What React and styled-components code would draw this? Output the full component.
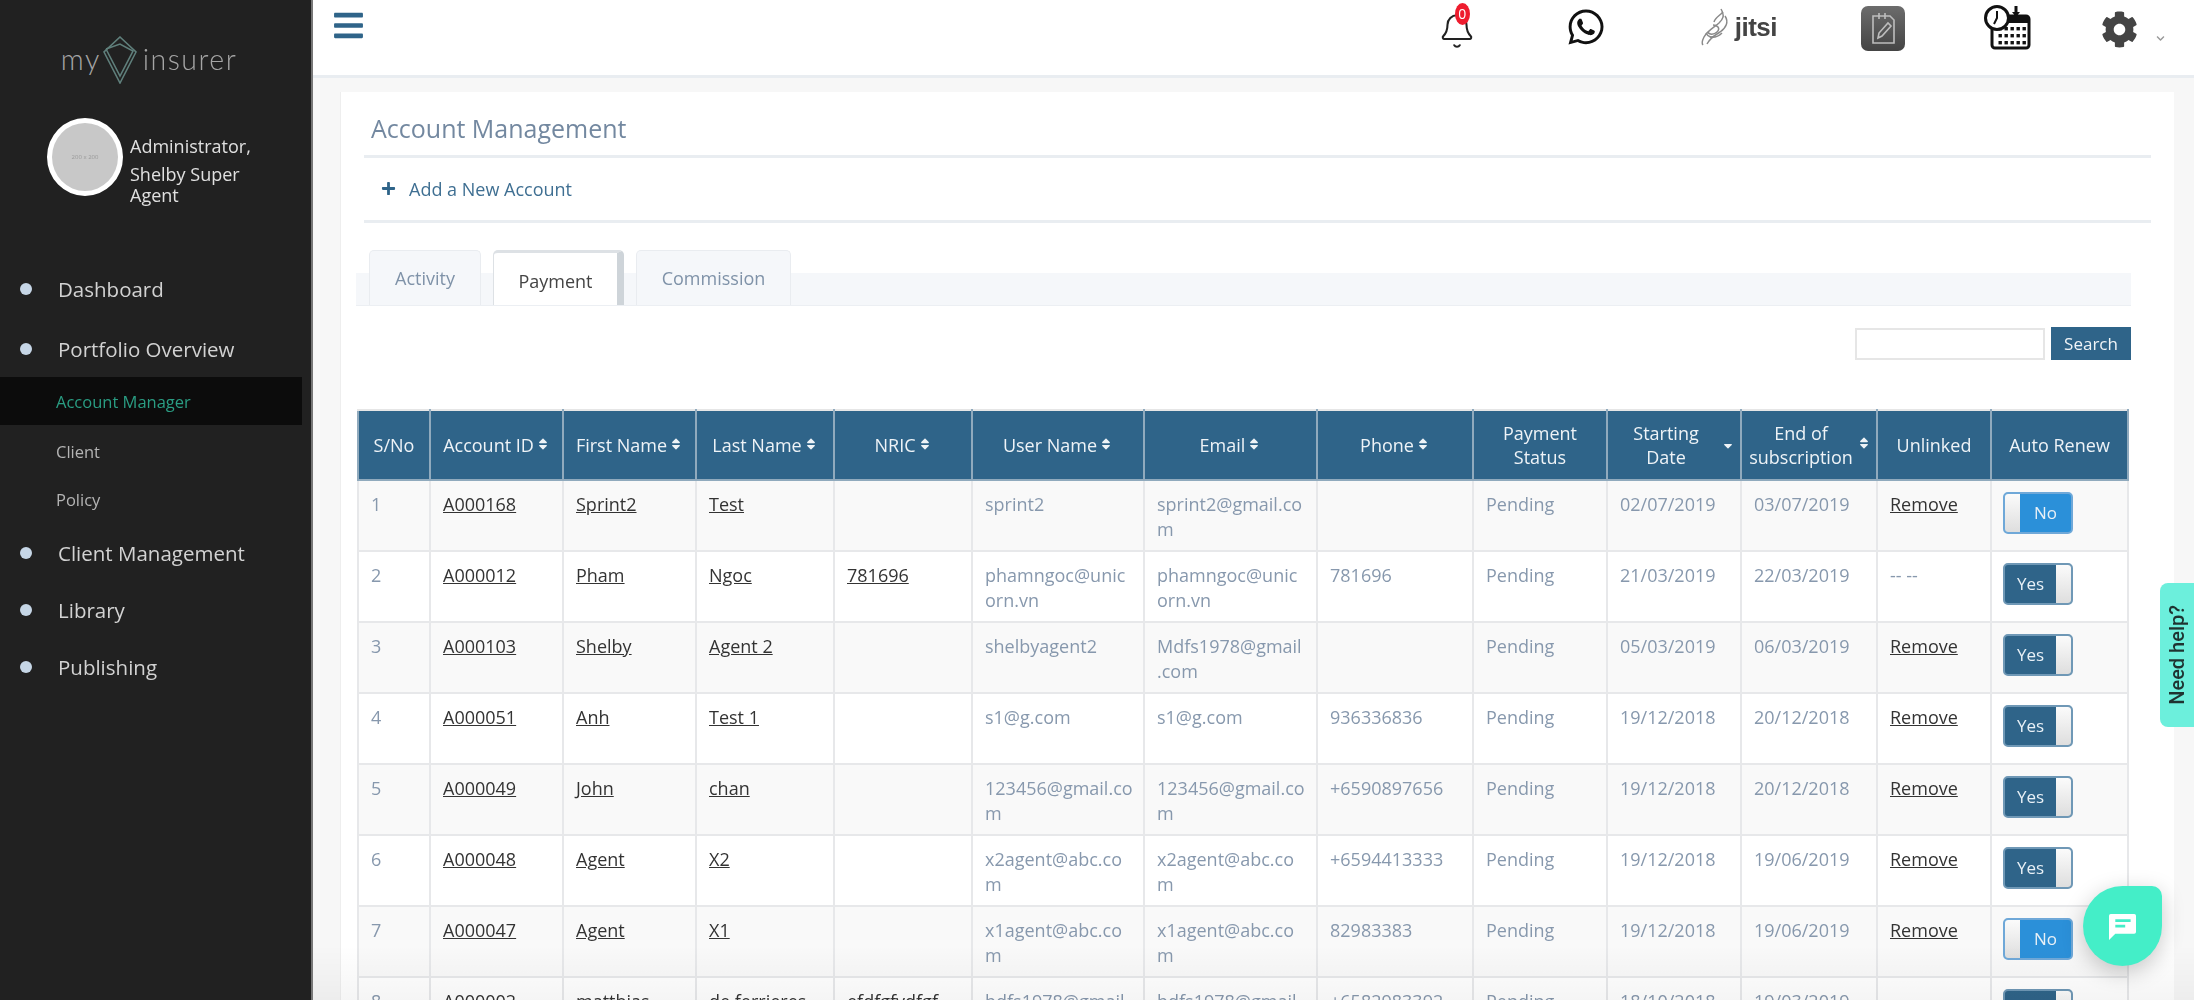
import React from "react";
import styled, { createGlobalStyle } from "styled-components";
import { FaBars, FaCog, FaPlus, FaSort, FaSortDown, FaWhatsapp, FaChevronDown } from "react-icons/fa";
import { Bell } from "lucide-react";

const Global = createGlobalStyle`
  html, body { margin: 0; padding: 0; height: 100%; overflow: hidden; }
  body { font-family: "Open Sans", "Liberation Sans", sans-serif; background: #f7f7f7; }
  * { box-sizing: border-box; }
`;

const Shell = styled.div`
  display: flex;
  height: 100vh;
  overflow: hidden;
  position: relative;
  filter: blur(0.6px);
`;

const Sidebar = styled.aside`
  width: 313px;
  flex-shrink: 0;
  background: #212121;
  border-right: 2px solid #777;
  padding-top: 36px;
`;

const Logo = styled.div`
  display: flex;
  align-items: center;
  justify-content: center;
  height: 48px;
  padding-right: 13px;
  gap: 5px;
  font-family: Lato, sans-serif;
  font-weight: 300;
  font-size: 28.5px;
  letter-spacing: 1.5px;
  color: #a5a5a5;

  span {
    margin-top: -3px;
  }
  span:first-child {
    margin-right: -4px;
  }
`;

const Profile = styled.div`
  display: flex;
  align-items: flex-start;
  margin: 34px 0 54px 47px;
  gap: 7px;
`;

const Avatar = styled.div`
  width: 76px;
  height: 78px;
  flex-shrink: 0;
  border-radius: 50%;
  border: 5px solid #fff;
  background: #c8c8c8;
  color: #999;
  font-size: 6px;
  display: flex;
  align-items: center;
  justify-content: center;
`;

const ProfileText = styled.div`
  width: 135px;
  color: #e0e0e0;
  font-size: 18px;
  line-height: 21px;
  padding-top: 18px;

  span {
    display: block;
    margin-bottom: 7px;
  }
`;

const MainItem = styled.div`
  display: flex;
  align-items: center;
  height: 57px;
  margin-top: ${(p) => p.$gap || 0}px;
  padding-left: 20px;
  font-size: 20.5px;
  color: #d2d2d2;

  &::before {
    content: "";
    width: 12px;
    height: 12px;
    border-radius: 50%;
    background: #c6d6e6;
    margin-right: 26px;
  }
`;

const SubItem = styled.div`
  display: flex;
  align-items: center;
  height: 48px;
  width: 302px;
  margin-bottom: ${(p) => p.$after || 0}px;
  padding-left: 56px;
  font-size: 16.5px;
  color: ${(p) => (p.$active ? "#2a9d83" : "#b4b4b4")};
  background: ${(p) => (p.$active ? "#0c0c0c" : "transparent")};
`;

const Main = styled.main`
  flex: 1;
  min-width: 0;
`;

const Topbar = styled.header`
  display: flex;
  align-items: flex-start;
  height: 78px;
  background: #fff;
  border-bottom: 3px solid #e9edf1;
  padding: 0 29px 0 19px;
  color: #2f6489;
`;

const Burger = styled.div`
  font-size: 33px;
  line-height: 1;
  margin-top: 9px;
  margin-right: auto;
`;

const TopIcon = styled.div`
  position: relative;
  margin-left: ${(p) => p.$left}px;
  margin-top: ${(p) => p.$top}px;
  color: ${(p) => p.$color || "#111"};
  line-height: 0;
`;

const BellBadge = styled.span`
  position: absolute;
  top: -9px;
  left: 17px;
  width: 15px;
  height: 22px;
  border-radius: 50%;
  background: #ee1c2e;
  color: #fff;
  font-size: 14px;
  line-height: 22px;
  text-align: center;
`;

const JitsiWrap = styled.div`
  display: flex;
  align-items: center;
  gap: 2px;
  margin-left: 93px;
  margin-top: 8px;
  height: 38px;
  font-family: "Liberation Sans", sans-serif;
  font-weight: 700;
  font-size: 26px;
  letter-spacing: -0.5px;
  color: #444;
`;

const Tile = styled.div`
  width: 44px;
  height: 45px;
  margin: 6px 0 0 84px;
  border-radius: 7px;
  background: linear-gradient(#6c6c6c, #444);
  display: flex;
  align-items: center;
  justify-content: center;
`;

const Content = styled.div`
  padding: 14px 20px 0 27px;
`;

const Card = styled.section`
  background: #fff;
  border-left: 1px solid #eee;
  padding: 0 43px 0 15px;
  height: 1000px;
`;

const Title = styled.h1`
  margin: 0 -20px 0 8px;
  height: 66px;
  padding: 17px 0 0 7px;
  font-size: 25px;
  line-height: 38px;
  font-weight: 400;
  color: #7388a0;
  border-bottom: 3px solid #e9edf1;
`;

const AddRow = styled.div`
  display: flex;
  align-items: center;
  margin: 0 -20px 0 8px;
  height: 65px;
  padding: 0 0 1px 17px;
  gap: 13px;
  font-size: 18px;
  color: #3f6f92;
  border-bottom: 3px solid #e9edf1;
  svg {
    color: #2f6489;
  }
`;

const Tabs = styled.nav`
  display: flex;
  align-items: flex-end;
  height: 55px;
  margin-top: 28px;
  padding-left: 13px;
  gap: 12px;
  background: linear-gradient(transparent 22px, #f5f7fa 22px);
  border-bottom: 1px solid #eceff3;
`;

const Tab = styled.div`
  display: flex;
  align-items: center;
  justify-content: center;
  height: 55px;
  width: ${(p) => p.$w}px;
  font-size: 18px;
  border-radius: 5px 5px 0 0;
  border: 1px solid ${(p) => (p.$active ? "#dde1e5" : "#e9ecf0")};
  border-bottom: none;
  padding-top: ${(p) => (p.$active ? 4 : 0)}px;
  color: ${(p) => (p.$active ? "#444" : "#7f92a8")};
  background: ${(p) => (p.$active ? "#fff" : "#f5f7fa")};
  border-top-width: ${(p) => (p.$active ? 3 : 1)}px;
  border-right: ${(p) => (p.$active ? "7px solid #ced4d9" : "1px solid #e9ecf0")};
`;

const SearchRow = styled.form`
  display: flex;
  justify-content: flex-end;
  align-items: center;
  gap: 6px;
  margin: 21px 0 49px;
  height: 33px;
`;

const SearchInput = styled.input`
  width: 190px;
  height: 32px;
  border: 2px solid #e6e6e6;
  background: #fff;
`;

const SearchButton = styled.button`
  width: 80px;
  height: 33px;
  border: none;
  background: #2f6489;
  color: #f0f4f7;
  font: 17px "Open Sans", sans-serif;
  padding: 0;
`;

const Table = styled.table`
  table-layout: fixed;
  width: 1770px;
  margin-left: 1px;
  border-collapse: collapse;
  font-size: 18px;
  line-height: 25px;
`;

const Th = styled.th`
  height: 70px;
  padding: 0 5px;
  background: #2f6489;
  border: 2px solid #90aabd;
  border-top-color: #e6e6e6;
  color: #eef3f7;
  font-weight: 400;
  font-size: 18px;
  line-height: 24px;
  text-align: center;
`;

const ThInner = styled.div`
  display: flex;
  align-items: center;
  justify-content: center;
  gap: 2px;
  svg {
    flex-shrink: 0;
    margin-top: ${(p) => (p.$two ? -4 : -3)}px;
  }
`;

const Row = styled.tr`
  background: ${(p) => (p.$odd ? "#f9f9f9" : "#fff")};
`;

const Td = styled.td`
  height: 71px;
  padding: 11px 4px 0 12px;
  vertical-align: top;
  border: 2px solid #e7e8ea;
  color: #8798ad;
  white-space: pre-line;
`;

const LinkText = styled.a`
  color: #333;
  text-decoration: underline;
`;

const Toggle = styled.div`
  display: flex;
  flex-direction: ${(p) => (p.$on ? "row" : "row-reverse")};
  width: 70px;
  height: 42px;
  margin-left: -1px;
  border-radius: 5px;
  overflow: hidden;
  border: 2px solid ${(p) => (p.$on ? "#6f98b6" : "#6fa8d8")};
  background: ${(p) => (p.$on ? "#2f6489" : "#2b90d9")};
  color: #e8f0f6;
  font-size: 17px;
  line-height: 38px;
  text-align: center;
`;

const ToggleLabel = styled.span`
  flex: 1;
`;

const ToggleHandle = styled.span`
  width: 15px;
  background: linear-gradient(#fbfbfb, #dedede);
`;

const NeedHelp = styled.div`
  position: absolute;
  top: 583px;
  right: 0;
  width: 34px;
  height: 144px;
  border-radius: 8px 0 0 8px;
  background: #6cefdc;
  color: #1f3331;
  font: 500 20px Roboto, sans-serif;
  display: flex;
  align-items: center;
  justify-content: center;

  span {
    writing-mode: vertical-rl;
    transform: rotate(180deg);
  }
`;

const ChatBubble = styled.div`
  position: absolute;
  top: 886px;
  right: 32px;
  width: 79px;
  height: 80px;
  border-radius: 50% 10px 50% 50%;
  background: #44eec8;
  box-shadow: 0 6px 22px rgba(0, 0, 0, 0.22);
  display: flex;
  align-items: center;
  justify-content: center;
`;

const BottomFade = styled.div`
  position: absolute;
  left: 313px;
  right: 0;
  bottom: 0;
  height: 55px;
  background: linear-gradient(transparent, rgba(0, 0, 0, 0.04));
  pointer-events: none;
`;

const widths = [72, 133, 133, 138, 138, 172, 173, 156, 134, 134, 136, 114, 137];

const headers = [
  { label: "S/No" },
  { label: "Account ID", sort: true },
  { label: "First Name", sort: true },
  { label: "Last Name", sort: true },
  { label: "NRIC", sort: true },
  { label: "User Name", sort: true },
  { label: "Email", sort: true },
  { label: "Phone", sort: true },
  { label: "Payment Status" },
  { label: "Starting Date", down: true },
  { label: "End of subscription", sort: true },
  { label: "Unlinked" },
  { label: "Auto Renew" },
];

// long addresses wrap mid word in the table, line ends kept here
const rows = [
  ["A000168", "Sprint2", "Test", "", "sprint2", "sprint2@gmail.co\nm", "", "02/07/2019", "03/07/2019", true, false],
  ["A000012", "Pham", "Ngoc", "781696", "phamngoc@unic\norn.vn", "phamngoc@unic\norn.vn", "781696", "21/03/2019", "22/03/2019", false, true],
  ["A000103", "Shelby", "Agent 2", "", "shelbyagent2", "Mdfs1978@gmail\n.com", "", "05/03/2019", "06/03/2019", true, true],
  ["A000051", "Anh", "Test 1", "", "s1@g.com", "s1@g.com", "936336836", "19/12/2018", "20/12/2018", true, true],
  ["A000049", "John", "chan", "", "123456@gmail.co\nm", "123456@gmail.co\nm", "+6590897656", "19/12/2018", "20/12/2018", true, true],
  ["A000048", "Agent", "X2", "", "x2agent@abc.co\nm", "x2agent@abc.co\nm", "+6594413333", "19/12/2018", "19/06/2019", true, true],
  ["A000047", "Agent", "X1", "", "x1agent@abc.co\nm", "x1agent@abc.co\nm", "82983383", "19/12/2018", "19/06/2019", true, false],
  ["A000002", "matthias", "de ferrieres", "efdfgfvdfgf", "bdfs1978@gmail\n.com", "bdfs1978@gmail\n.com", "+6582983392", "18/10/2018", "19/03/2019", false, true],
];

const DiamondLogo = () => (
  <svg width="36" height="48" viewBox="0 0 36 48" fill="none" stroke="#5f7f7b" strokeWidth="1.6">
    <path d="M18 1 L34 16 L18 47 L2 16 Z" />
    <path d="M4 13 L18 8 L31 15 L18 40 L4 13" />
  </svg>
);

const JitsiFlame = () => (
  <svg width="34" height="38" viewBox="0 0 34 38" fill="none" stroke="#8a8a8a" strokeWidth="1.5">
    <path d="M22 1 C26 8 24 11 20 15 C14 20 8 23 5 29 C3 33 3 36 4 37" />
    <path d="M26 8 C30 14 27 20 21 24 C16 27 11 30 8 36" />
    <path d="M14 17 C18 17 22 20 18 24 C15 27 10 27 9 24" />
    <path d="M11 29 C16 30 20 28 23 25" />
    <path d="M24 4 C20 8 16 10 15 14 M7 25 C9 29 13 30 15 28" />
  </svg>
);

const NotepadIcon = () => (
  <svg width="26" height="34" viewBox="0 0 26 34" fill="none" stroke="#bdbdbd" strokeWidth="1.6">
    <path d="M6 4 H20 L24 8 V31 H3 V4 Z" />
    <path d="M9 1 V7 M15 1 V7" />
    <path d="M8 26 L9 21 L18 11 L21 14 L12 24 Z" />
  </svg>
);

const CalendarClock = () => (
  <svg width="48" height="45" viewBox="0 0 48 45">
    <rect x="9" y="11" width="37" height="32" rx="3" fill="#fff" stroke="#111" strokeWidth="3" />
    <rect x="9" y="11" width="37" height="7" fill="#111" />
    <path d="M33 1 V11" stroke="#111" strokeWidth="3" />
    <path d="M29 7 L33 12 L37 7" fill="#111" />
    {[22, 29, 36].map((y) =>
      [17, 23, 29, 35, 41].map((x) => <rect key={x + "-" + y} x={x - 1.5} y={y} width="3.4" height="3.4" fill="#111" />)
    )}
    <circle cx="14" cy="13" r="11.5" fill="#fff" stroke="#111" strokeWidth="3" />
    <path d="M14 6 V13 L11 19" fill="none" stroke="#111" strokeWidth="2" />
  </svg>
);

const ChatIcon = () => (
  <svg width="29" height="27" viewBox="0 0 32 30">
    <path
      fill="#fff"
      d="M3 1 H29 Q31 1 31 3 V21 Q31 23 29 23 H8 L1 30 V3 Q1 1 3 1 Z M8 7 V10 H25 V7 Z M8 13 V16 H19 V13 Z"
      fillRule="evenodd"
    />
  </svg>
);

const HeaderCell = ({ col }) => {
  const two = ["Payment Status", "Starting Date", "End of subscription"].includes(col.label);
  return (
    <Th>
      <ThInner $two={two}>
        <span>{col.label}</span>
        {col.sort && <FaSort size={14} />}
        {col.down && <FaSortDown size={14} />}
      </ThInner>
    </Th>
  );
};

const RenewToggle = ({ on }) => (
  <Toggle $on={on}>
    <ToggleLabel>{on ? "Yes" : "No"}</ToggleLabel>
    <ToggleHandle />
  </Toggle>
);

export default function App() {
  return (
    <>
      <Global />
      <Shell>
        <Sidebar>
          <Logo>
            <span>my</span>
            <DiamondLogo />
            <span>insurer</span>
          </Logo>
          <Profile>
            <Avatar>200 x 200</Avatar>
            <ProfileText>
              <span>Administrator,</span>
              Shelby Super Agent
            </ProfileText>
          </Profile>
          <MainItem>Dashboard</MainItem>
          <MainItem $gap={3}>Portfolio Overview</MainItem>
          <SubItem $active $after={2}>Account Manager</SubItem>
          <SubItem>Client</SubItem>
          <SubItem $after={1}>Policy</SubItem>
          <MainItem>Client Management</MainItem>
          <MainItem>Library</MainItem>
          <MainItem>Publishing</MainItem>
        </Sidebar>
        <Main>
          <Topbar>
            <Burger><FaBars /></Burger>
            <TopIcon $left={0} $top={12}>
              <Bell size={38} strokeWidth={1.3} color="#222" />
              <BellBadge>0</BellBadge>
            </TopIcon>
            <TopIcon $left={90} $top={7}><FaWhatsapp size={40} /></TopIcon>
            <JitsiWrap>
              <JitsiFlame />
              jitsi
            </JitsiWrap>
            <Tile><NotepadIcon /></Tile>
            <TopIcon $left={78} $top={5}><CalendarClock /></TopIcon>
            <TopIcon $left={70} $top={11} $color="#444"><FaCog size={37} /></TopIcon>
            <TopIcon $left={18} $top={34} $color="#999"><FaChevronDown size={9} /></TopIcon>
          </Topbar>
          <Content>
            <Card>
              <Title>Account Management</Title>
              <AddRow>
                <FaPlus size={15} />
                Add a New Account
              </AddRow>
              <Tabs>
                <Tab $w={112}>Activity</Tab>
                <Tab $w={131} $active>Payment</Tab>
                <Tab $w={155}>Commission</Tab>
              </Tabs>
              <SearchRow>
                <SearchInput />
                <SearchButton type="button">Search</SearchButton>
              </SearchRow>
              <Table>
                <colgroup>
                  {widths.map((w, i) => <col key={i} width={w} />)}
                </colgroup>
                <thead>
                  <tr>
                    {headers.map((col) => <HeaderCell key={col.label} col={col} />)}
                  </tr>
                </thead>
                <tbody>
                  {rows.map((r, i) => (
                    <Row key={r[0]} $odd={i % 2 === 0}>
                      <Td>{i + 1}</Td>
                      <Td><LinkText>{r[0]}</LinkText></Td>
                      <Td><LinkText>{r[1]}</LinkText></Td>
                      <Td><LinkText>{r[2]}</LinkText></Td>
                      <Td>{r[3] && <LinkText>{r[3]}</LinkText>}</Td>
                      <Td>{r[4]}</Td>
                      <Td>{r[5]}</Td>
                      <Td>{r[6]}</Td>
                      <Td>Pending</Td>
                      <Td>{r[7]}</Td>
                      <Td>{r[8]}</Td>
                      <Td>{r[9] ? <LinkText>Remove</LinkText> : "-- --"}</Td>
                      <Td><RenewToggle on={r[10]} /></Td>
                    </Row>
                  ))}
                </tbody>
              </Table>
            </Card>
          </Content>
        </Main>
        <BottomFade />
        <NeedHelp><span>Need help?</span></NeedHelp>
        <ChatBubble><ChatIcon /></ChatBubble>
      </Shell>
    </>
  );
}
